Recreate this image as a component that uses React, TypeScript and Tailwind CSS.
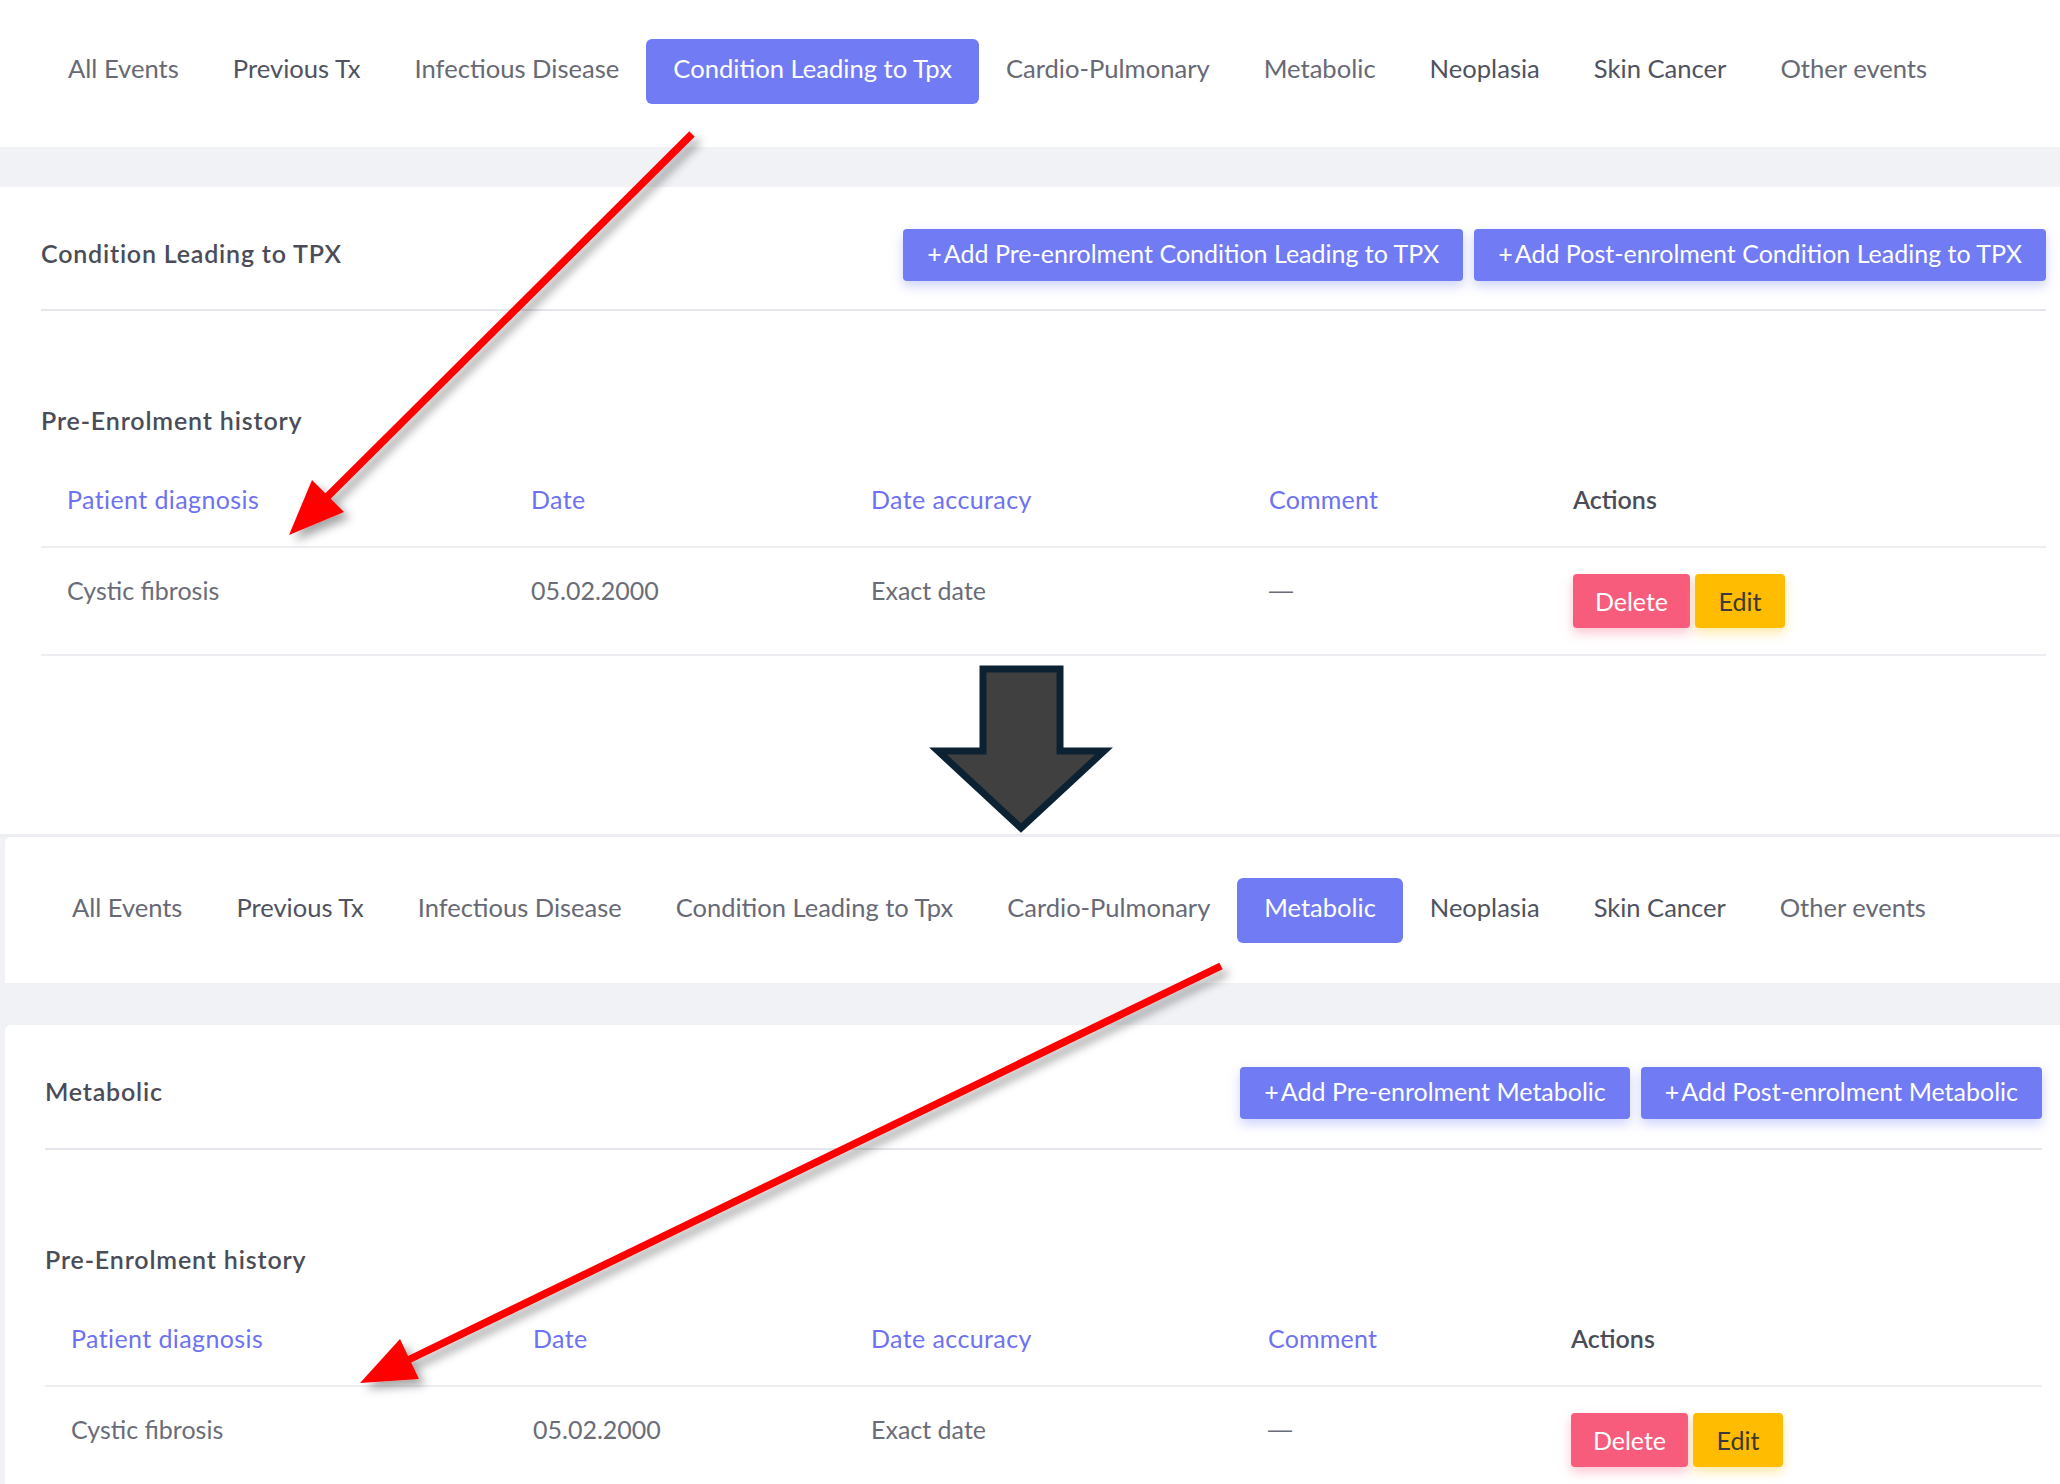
import React from "react";

const TABS = [
  "All Events",
  "Previous Tx",
  "Infectious Disease",
  "Condition Leading to Tpx",
  "Cardio-Pulmonary",
  "Metabolic",
  "Neoplasia",
  "Skin Cancer",
  "Other events",
];
const DARKER = new Set(["Previous Tx", "Neoplasia", "Skin Cancer"]);

function Tabs({ active, small }: { active: string; small?: boolean }) {
  const size = small ? " text-[25.5px]" : " text-[25.6px]";
  return (
    <div className="flex items-center">
      {TABS.map((t) =>
        t === active ? (
          <div
            key={t}
            className={"h-[65px] px-[27px] pb-[7px] flex items-center rounded-[6px] bg-[#717cf4] text-white leading-[32px]" + size}
          >
            {t}
          </div>
        ) : (
          <div
            key={t}
            className={
              (DARKER.has(t)
                ? "h-[65px] px-[27px] pb-[7px] flex items-center leading-[32px] text-[#4f5260]"
                : "h-[65px] px-[27px] pb-[7px] flex items-center leading-[32px] text-[#676975]") + size
            }
          >
            {t}
          </div>
        )
      )}
    </div>
  );
}

function AddButton({ label }: { label: string }) {
  return (
    <div className="h-[52px] px-[24px] pb-[4px] flex items-center rounded-[4px] bg-[#717cf4] text-white text-[25px] leading-[32px] shadow-[0_5px_12px_rgba(113,124,244,0.35)]">
      <span className="mr-[2px]">+</span>
      {label}
    </div>
  );
}

function Table({ cols }: { cols: string }) {
  return (
    <div className="mt-[16px]">
      <div className={cols + " h-[96px] items-center border-b-2 border-[#eceef2] text-[25px] leading-[32px]"}>
        <div className="pl-[26px] text-[#6d72f2] tracking-[0.4px]">Patient diagnosis</div>
        <div className="pl-[26px] text-[#6d72f2] tracking-[0.4px]">Date</div>
        <div className="pl-[26px] text-[#6d72f2] tracking-[0.4px]">Date accuracy</div>
        <div className="pl-[26px] text-[#6d72f2] tracking-[0.2px]">Comment</div>
        <div className="pl-[26px] text-[#4a4d57] font-semibold">Actions</div>
      </div>
      <div className={cols + " h-[108px] items-start pt-[26px] border-b-2 border-[#eceef2] text-[25px] leading-[32px] text-[#6a6d78]"}>
        <div className="pl-[26px]">Cystic fibrosis</div>
        <div className="pl-[26px]">05.02.2000</div>
        <div className="pl-[26px]">Exact date</div>
        <div className="pl-[26px] font-['Liberation_Sans',sans-serif] text-[24px]">—</div>
        <div className="pl-[26px] flex gap-[5px]">
          <div className="h-[54px] w-[117px] flex items-center justify-center rounded-[4px] bg-[#f75c7c] text-white shadow-[0_5px_12px_rgba(247,92,124,0.35)]">
            Delete
          </div>
          <div className="h-[54px] w-[90px] flex items-center justify-center rounded-[4px] bg-[#ffbc00] text-[#3b3a36] shadow-[0_5px_12px_rgba(255,188,0,0.35)]">
            Edit
          </div>
        </div>
      </div>
    </div>
  );
}

function ScreenA() {
  return (
    <div className="h-[834px] flex flex-col bg-white">
      <div className="h-[147px] shrink-0 bg-white pl-[41px] pt-[39px]">
        <Tabs active="Condition Leading to Tpx" />
      </div>
      <div className="h-[40px] shrink-0 bg-[#f1f2f6]" />
      <div className="flex-1 bg-white rounded-tl-[6px] pl-[41px] pr-[14px] pt-[42px]">
        <div className="flex items-center justify-between h-[52px]">
          <div className="pb-[5px] text-[25px] leading-[32px] font-semibold tracking-[0.8px] text-[#4a4d58]">
            Condition Leading to TPX
          </div>
          <div className="flex gap-[11px]">
            <AddButton label="Add Pre-enrolment Condition Leading to TPX" />
            <AddButton label="Add Post-enrolment Condition Leading to TPX" />
          </div>
        </div>
        <div className="mt-[28px] h-[2px] bg-[#e4e6eb]" />
        <div className="mt-[93px] text-[25px] leading-[32px] font-semibold tracking-[0.85px] text-[#4a4d58]">
          Pre-Enrolment history
        </div>
        <Table cols="grid grid-cols-[464px_340px_398px_304px_1fr]" />
      </div>
    </div>
  );
}

function ScreenB() {
  return (
    <div className="h-[650px] flex flex-col bg-[#f1f2f6] border-t-[3px] border-[#eceef2]">
      <div className="h-[146px] shrink-0 ml-[5px] bg-white rounded-tl-[6px] pl-[40px] pt-[41px]">
        <Tabs active="Metabolic" small />
      </div>
      <div className="h-[42px] shrink-0 bg-[#f1f2f6]" />
      <div className="flex-1 ml-[5px] bg-white rounded-tl-[6px] pl-[40px] pr-[18px] pt-[42px]">
        <div className="flex items-center justify-between h-[52px]">
          <div className="pb-[5px] text-[25px] leading-[32px] font-semibold tracking-[0.8px] text-[#4a4d58]">
            Metabolic
          </div>
          <div className="flex gap-[11px]">
            <AddButton label="Add Pre-enrolment Metabolic" />
            <AddButton label="Add Post-enrolment Metabolic" />
          </div>
        </div>
        <div className="mt-[29px] h-[2px] bg-[#e4e6eb]" />
        <div className="mt-[93px] text-[25px] leading-[32px] font-semibold tracking-[0.85px] text-[#4a4d58]">
          Pre-Enrolment history
        </div>
        <Table cols="grid grid-cols-[462px_338px_397px_303px_1fr]" />
      </div>
    </div>
  );
}

function Overlay() {
  return (
    <svg
      className="absolute inset-0 pointer-events-none"
      width="2060"
      height="1484"
      viewBox="0 0 2060 1484"
    >
      <defs>
        <filter id="sh" x="-20%" y="-20%" width="140%" height="140%">
          <feDropShadow dx="6" dy="6" stdDeviation="5" floodColor="#000" floodOpacity="0.35" />
        </filter>
      </defs>
      <g filter="url(#sh)">
        <line x1="692" y1="134" x2="322" y2="502" stroke="#ff0000" strokeWidth="7.5" />
        <polygon points="289,535 344,512 312,480" fill="#ff0000" />
      </g>
      <g filter="url(#sh)">
        <line x1="1221" y1="966" x2="404" y2="1362" stroke="#ff0000" strokeWidth="7.5" />
        <polygon points="360,1383 419,1379 400,1339" fill="#ff0000" />
      </g>
      <polygon
        points="983,669 1060,669 1060,751 1104,751 1021,828 938,751 983,751"
        fill="#404040"
        stroke="#0c2232"
        strokeWidth="7"
        strokeLinejoin="miter"
      />
    </svg>
  );
}

export default function App() {
  return (
    <div className="relative w-[2060px] h-[1484px] overflow-hidden bg-white font-['Lato',sans-serif]">
      <ScreenA />
      <ScreenB />
      <Overlay />
    </div>
  );
}
